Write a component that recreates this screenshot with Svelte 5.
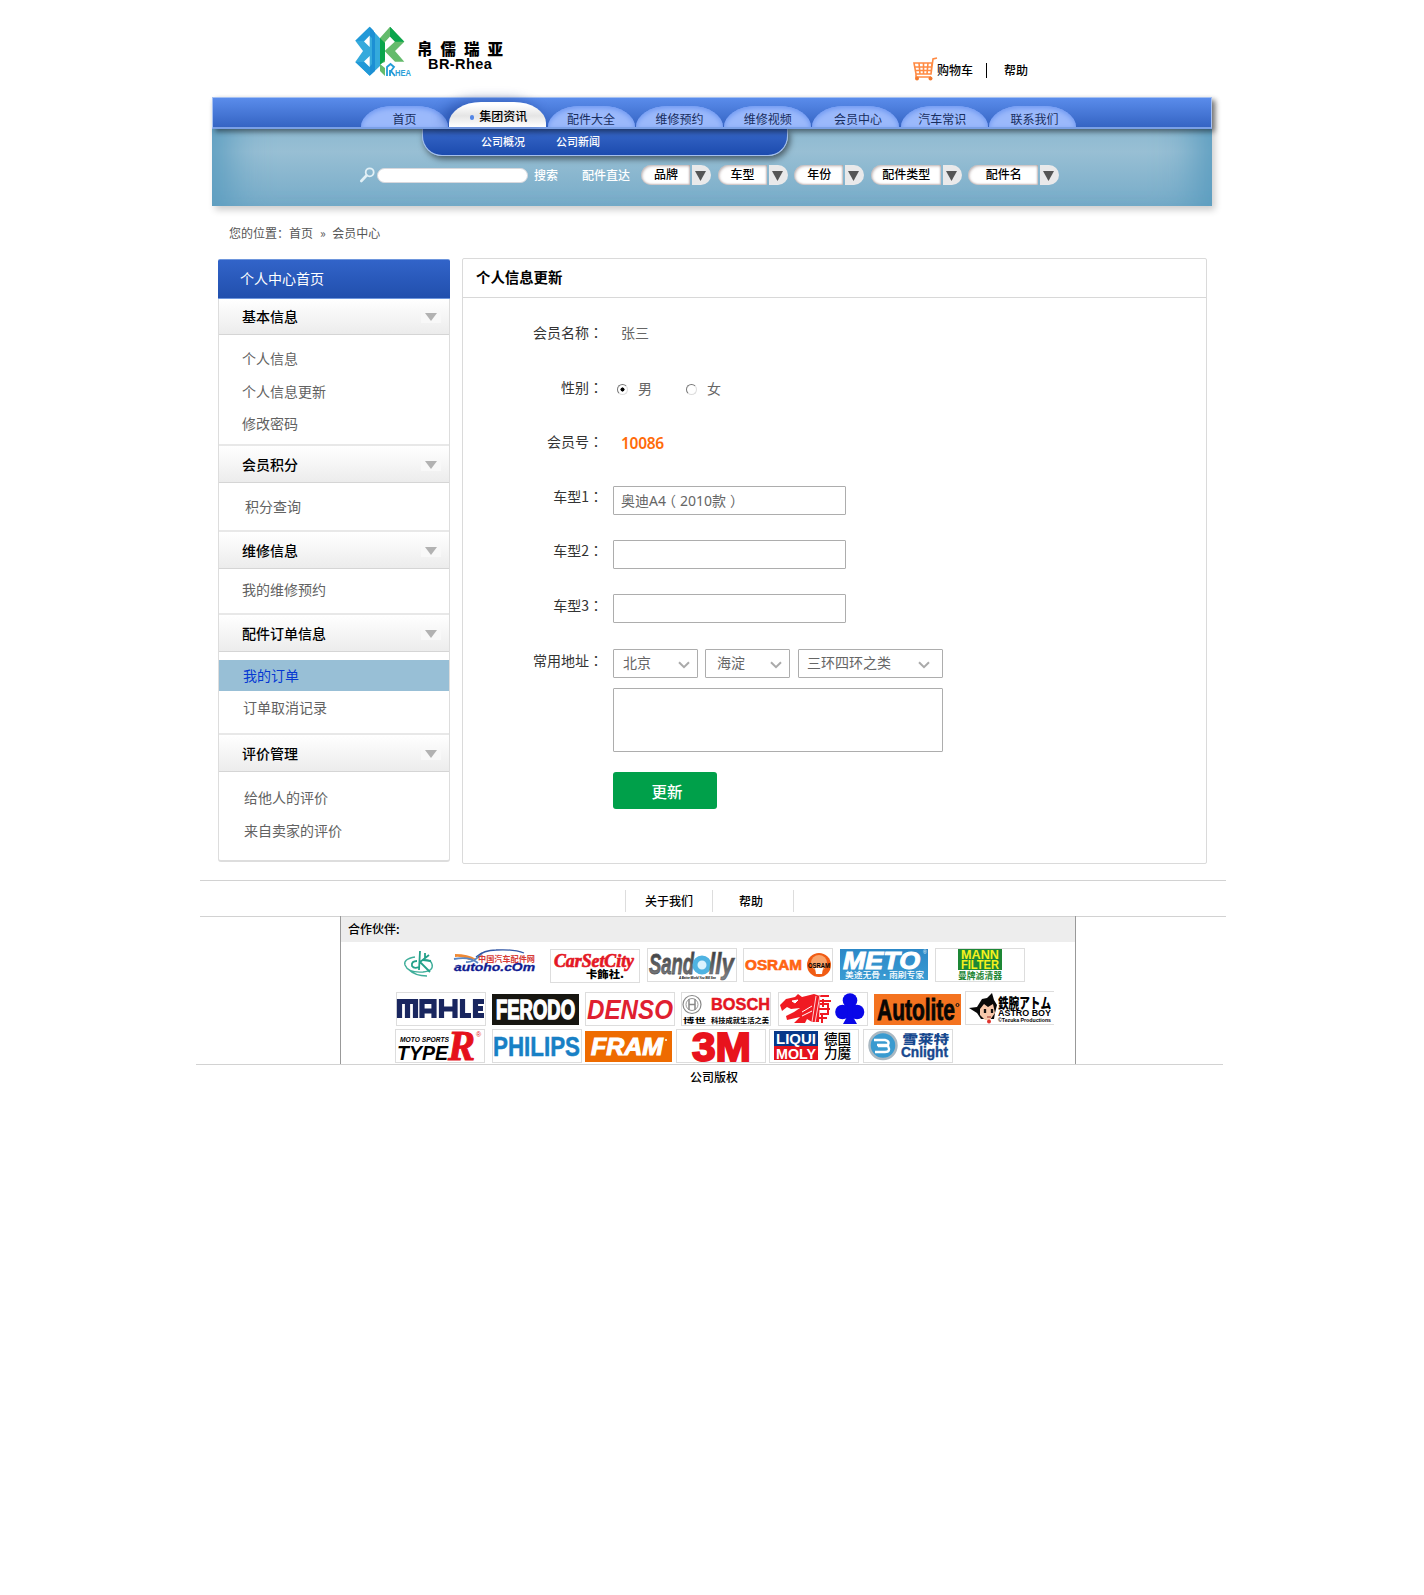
<script>
  const tabs = ['首页', '集团资讯', '配件大全', '维修预约', '维修视频', '会员中心', '汽车常识', '联系我们'];
  const filters = [
    { label: '品牌', size: 'small' },
    { label: '车型', size: 'small' },
    { label: '年份', size: 'small' },
    { label: '配件类型', size: 'large' },
    { label: '配件名', size: 'large' }
  ];
  const groups = [
    { key: 'basic', title: '基本信息', items: ['个人信息', '个人信息更新', '修改密码'] },
    { key: 'points', title: '会员积分', items: ['积分查询'] },
    { key: 'repair', title: '维修信息', items: ['我的维修预约'] },
    { key: 'orders', title: '配件订单信息', items: ['我的订单', '订单取消记录'] },
    { key: 'reviews', title: '评价管理', items: ['给他人的评价', '来自卖家的评价'] }
  ];
  const active = '我的订单';
</script>

{#snippet chevron()}
  <svg class="chevron" width="12" height="8" viewBox="0 0 12 8"><path d="M1 1.2 6 6.2 11 1.2" fill="none" stroke="#aaa" stroke-width="2" /></svg>
{/snippet}

<div class="page">
  <header>
    <svg class="emblem" width="58" height="52" viewBox="0 0 58 52">
      <path d="M14.700 .7 .3 14.700 8 25 .3 36 14.700 49.700 25 40V12Z" fill="#35aadc" />
      <path d="M14.700 .7 .3 14.700H9L14.700 9.500ZM.3 36H9L14.700 41V49.700Z" fill="#2199d8" />
      <path d="M14.700 .7 20 6V45L14.700 49.700V41L17 38V12L14.700 10Z" fill="#1c8fd4" />
      <path d="M14.700 9.500 9 15.500 14.700 21ZM14.700 30 9 35.500 14.700 41Z" fill="#fff" />
      <path d="M18 0 25 8V12L19 5.500Z" fill="#fff" />
      <path d="M25 12 35 .7 49.300 15.700 40 25 49.300 35.700H40L29.600 25 40 15.500 35 10.500 30 16V36L25 38Z" fill="#64bb6c" />
      <path d="M35 .7 49.300 15.700H40L35 10.500ZM25 12 30 17V34L25 39Z" fill="#0aa54c" />
      <path d="M25 38 30 42V50L25 45Z" fill="#64bb6c" />
      <path d="M32 50V41L35.500 38 39 41 36 45 40 50M35 50V44" fill="none" stroke="#219bd8" stroke-width="1.800" />
      <text x="40" y="49.5" font-size="9" font-weight="bold" fill="#2ba0d9" textLength="16" lengthAdjust="spacingAndGlyphs">HEA</text>
    </svg>
    <div class="brand"><b>帛儒瑞亚</b><span>BR-Rhea</span></div>
    <div class="tools">
      <svg width="26" height="24" viewBox="0 0 26 24">
        <path d="M2 6H20L19 17H4ZM2.500 10H19.500M3.500 13.500H19M7 6 8 17M11.500 6V17M16 6 15 17M19 17 21 2 25 1M4 17 4 20H19" fill="none" stroke="#ff8a43" stroke-width="1.6" />
        <circle cx="5" cy="21.5" r="2" fill="#f47a30" /><circle cx="18.500" cy="21.5" r="2" fill="#f47a30" />
      </svg>
      <span class="cart">购物车</span><i></i><span>帮助</span>
    </div>
  </header>

  <div class="banner">
    <nav>
      {#each tabs as tab, i}
        <a class="tab" class:current={i === 1}>{#if i === 1}<i class="dot"></i>{/if}{tab}</a>
      {/each}
    </nav>
    <div class="submenu"><span>公司概况</span><span>公司新闻</span></div>
    <div class="search">
      <svg width="15" height="16" viewBox="0 0 15 16"><circle cx="9.700" cy="5.300" r="4" fill="none" stroke="#e2f0f6" stroke-width="1.8" /><path d="M6.500 8.500 1.300 14" stroke="#e2f0f6" stroke-width="2.600" stroke-linecap="round" /></svg>
      <div class="query"></div>
      <span class="go">搜索</span>
      <span class="direct">配件直达</span>
      <div class="filters">
        {#each filters as f}
          <div class="filter {f.size}"><span>{f.label}</span><b><svg width="11" height="10" viewBox="0 0 11 10"><path d="M0 0H11L5.500 10Z" fill="#555" /></svg></b></div>
        {/each}
      </div>
    </div>
  </div>

  <div class="crumbs">您的位置：<span>首页</span><em>»</em><span>会员中心</span></div>

  <div class="columns">
    <aside>
      <h2>个人中心首页</h2>
      {#each groups as g}
        <section class={g.key}>
          <h3>{g.title}<i><svg width="12" height="8" viewBox="0 0 12 8"><path d="M0 0H12L6 8Z" fill="#b2b2b2" /></svg></i></h3>
          <ul>
            {#each g.items as item}<li class:on={item === active}>{item}</li>{/each}
          </ul>
        </section>
      {/each}
    </aside>

    <main>
      <h1>个人信息更新</h1>
      <form>
        <div class="row"><label>会员名称<u>：</u></label><span class="value">张三</span></div>
        <div class="row"><label>性别<u>：</u></label>
          <div class="radios"><i class="radio checked"></i><span>男</span><i class="radio"></i><span>女</span></div>
        </div>
        <div class="row"><label>会员号<u>：</u></label><span class="value number">10086</span></div>
        <div class="row"><label>车型1<u>：</u></label><div class="input">奥迪A4<s class="open">（</s>2010款<s class="close">）</s></div></div>
        <div class="row"><label>车型2<u>：</u></label><div class="input"></div></div>
        <div class="row third"><label>车型3<u>：</u></label><div class="input"></div></div>
        <div class="row"><label>常用地址<u>：</u></label>
          <div class="address">
            <div class="select">北京{@render chevron()}</div>
            <div class="select mid">海淀{@render chevron()}</div>
            <div class="select wide">三环四环之类{@render chevron()}</div>
          </div>
        </div>
        <div class="area"></div>
        <button type="button">更新</button>
      </form>
    </main>
  </div>

  <div class="links"><span>关于我们</span><span>帮助</span></div>

  <div class="partners">
    <h4>合作伙伴:</h4>
    <div class="logos first">
      <svg viewBox="0 0 34 34" width="34" height="34">
        <path d="M12 9Q0 11 2 17Q5 25 20 24Q31 23 29 16Q28 12 22 12M5 21Q12 28 24 28" fill="none" stroke="#3fae9a" stroke-width="1.400" />
        <path d="M17 3 16 22M26 7 17 14 27 24M20 12 28 13M22 5V10M14 13Q8 13 9 18Q11 21 16 19" fill="none" stroke="#23a18a" stroke-width="1.800" />
      </svg>
      <svg viewBox="0 0 82 34" width="82" height="34">
        <path d="M1 6Q14 6 22 11L15 12Q8 8 1 9Z" fill="#f08a35" /><path d="M0 11Q16 8 24 15M12 14Q20 15 28 5" fill="none" stroke="#5a87c4" stroke-width="1.800" />
        <path d="M22 9Q30 2 42 2Q60 1 70 5" fill="none" stroke="#3157a5" stroke-width="1.300" />
        <text class="cn" x="24" y="13.500" font-size="8" fill="#d63b35" font-weight="bold" textLength="57" lengthAdjust="spacingAndGlyphs">中国汽车配件网</text>
        <text x="0" y="23" font-size="11" font-weight="bold" font-style="italic" fill="#101b91" stroke="#101b91" stroke-width=".3" textLength="81" lengthAdjust="spacingAndGlyphs">autoho.cOm</text>
      </svg>
      <svg class="framed lowered" viewBox="0 0 90 34" width="90" height="34">
        <text class="serif" x="4" y="18" font-size="19" font-weight="bold" font-style="italic" fill="#e41724" stroke="#e41724" stroke-width=".7" textLength="80" lengthAdjust="spacingAndGlyphs">CarSetCity</text>
        <text class="cn" x="36" y="29" font-size="10" font-weight="900" textLength="38" lengthAdjust="spacingAndGlyphs">卡飾社.</text>
      </svg>
      <svg class="framed" viewBox="0 0 90 34" width="90" height="34">
        <defs><linearGradient id="steel" x2="0" y2="1"><stop stop-color="#333" /><stop offset="1" stop-color="#85878b" /></linearGradient></defs>
        <text x="2" y="26" font-size="29" font-weight="bold" font-style="italic" fill="url(#steel)" stroke="#55565a" stroke-width=".8" textLength="45" lengthAdjust="spacingAndGlyphs">Sand</text>
        <circle cx="55" cy="17" r="7" fill="#d9f3fe" stroke="#4fb3e2" stroke-width="5" />
        <text x="62" y="26" font-size="29" font-weight="bold" font-style="italic" fill="url(#steel)" stroke="#55565a" stroke-width=".6" textLength="25" lengthAdjust="spacingAndGlyphs">lly</text>
        <text x="32" y="31" font-size="3" font-weight="bold" font-style="italic" textLength="37">A Better World You Will See</text>
      </svg>
      <svg class="framed" viewBox="0 0 90 34" width="90" height="34">
        <text x="2" y="22" font-size="14" font-weight="bold" fill="#ff6412" stroke="#ff6412" stroke-width=".6" textLength="57" lengthAdjust="spacingAndGlyphs">OSRAM</text>
        <circle cx="76" cy="17" r="12" fill="#f15c14" /><circle cx="76" cy="15" r="8" fill="#f9a56c" /><path d="M72 20H80L79 26H73Z" fill="#fff" />
        <text x="65" y="19.500" font-size="6.500" font-weight="bold" textLength="22" lengthAdjust="spacingAndGlyphs">OSRAM</text>
      </svg>
      <svg viewBox="0 0 88 34" width="88" height="34">
        <defs><linearGradient id="meto" x2="0" y2="1"><stop stop-color="#2c88c7" /><stop offset="1" stop-color="#3a9bd2" /></linearGradient></defs>
        <path d="M0 1H88V32H0Z" fill="url(#meto)" />
        <text x="3" y="21" font-size="24" font-weight="bold" font-style="italic" fill="#fff" stroke="#fff" textLength="77" lengthAdjust="spacingAndGlyphs">METO</text><text x="83" y="6" font-size="5" fill="#fff">®</text>
        <text class="cn" x="5" y="30" font-size="8.500" fill="#fff" font-weight="500" textLength="79" lengthAdjust="spacingAndGlyphs">美途无骨•雨刷专家</text>
      </svg>
      <svg class="framed" viewBox="0 0 90 34" width="90" height="34">
        <path d="M23 1H67V22H23Z" fill="#1d8735" />
        <g fill="#f6f11e" font-weight="bold" font-size="12"><text x="26" y="11" textLength="38" lengthAdjust="spacingAndGlyphs">MANN</text><text x="26" y="20.500" textLength="38" lengthAdjust="spacingAndGlyphs">FILTER</text></g>
        <text class="cn" x="23" y="31" font-size="9" font-weight="bold" fill="#1d8735" textLength="44" lengthAdjust="spacingAndGlyphs">曼牌滤清器</text>
      </svg>
    </div>
    <div class="logos second">
      <svg class="framed" viewBox="0 0 90 34" width="90" height="34"><g fill="none" stroke="#19265f" stroke-width="5.200"><path d="M3.500 26V9.500H19.500V26M11.500 9.500V26M26 26V9.500H38V26M26 19H38M45.500 7V26M59 7V26M45.500 17H59M66.500 7V23.500H75M88 9.500H79.500V23.500H88M79 16.500H87" /></g></svg>
      <svg viewBox="0 0 87 34" width="87" height="34"><path d="M0 2H87V33H0Z" fill="#171611" /><text x="4" y="27" font-size="27" font-weight="bold" fill="#fff" stroke="#fff" stroke-width="1.500" textLength="79" lengthAdjust="spacingAndGlyphs">FERODO</text></svg>
      <svg class="framed" viewBox="0 0 90 34" width="90" height="34"><text x="2" y="27" font-size="28" font-weight="bold" font-style="italic" fill="#df2030" textLength="86" lengthAdjust="spacingAndGlyphs">DENSO</text></svg>
      <svg class="framed" viewBox="0 0 90 34" width="90" height="34">
        <circle cx="11" cy="12.500" r="9" fill="none" stroke="#888" stroke-width="1.200" /><circle cx="11" cy="12.500" r="6" fill="none" stroke="#999" /><path d="M8 7V18M14 7V18M8 12.500H14" stroke="#888" stroke-width="1.500" />
        <text x="30" y="18" font-size="17" font-weight="bold" fill="#e41522" stroke="#e41522" stroke-width=".5" textLength="59" lengthAdjust="spacingAndGlyphs">BOSCH</text>
        <g font-size="6.500" font-weight="bold"><text class="cn" x="2" y="31" textLength="23" lengthAdjust="spacingAndGlyphs">博世</text><text class="cn" x="30" y="31" textLength="58" lengthAdjust="spacingAndGlyphs">科技成就生活之美</text></g>
      </svg>
      <svg class="framed" viewBox="0 0 90 34" width="90" height="34">
        <path d="M2 13 8 7 17 5 20 2 24 5 36 2 42 4 41 30H34L29 27 27 31H16L22 25 9 28 8 24 16 20 22 16 13 17 9 15 4 19Z" fill="#f01a22" />
        <path d="M14 9 20 8 17 11ZM24 20 34 14M24 24 34 19" fill="#fff" stroke="#fff" />
        <path d="M41 4H51M40 9H53M45 7V15M39 17H52M42 12H50V22H42M40 26H49M44 21V31" fill="none" stroke="#f01a22" stroke-width="2" />
        <path d="M38 4 34 30M42 3 37 31" stroke="#fff" stroke-width=".8" />
        <g fill="#0907e8"><circle cx="72" cy="8.500" r="7.300" /><circle cx="64.500" cy="20" r="7.300" /><circle cx="79" cy="20" r="7.300" /><path d="M69 12H75L74 23 79 32H65L70 23Z" /></g>
      </svg>
      <svg viewBox="0 0 87 34" width="87" height="34"><path d="M0 2H87V33H0Z" fill="#f47320" /><text x="3" y="28" font-size="29" font-weight="bold" fill="#080604" stroke="#080604" stroke-width=".8" textLength="78" lengthAdjust="spacingAndGlyphs">Autolite</text><circle cx="83.500" cy="13" r="1.500" fill="none" stroke="#111" /></svg>
      <svg class="framed open-right raised" viewBox="0 0 90 34" width="90" height="34">
        <path d="M4 17 12 16 17 8 22 7 27 2 29 9 32 14 30 22 29 28H16L12 22Z" fill="#090909" /><path d="M15 18 19 13 23 16 28 13 30 22 25 29H20L15 24Z" fill="#f8c8aa" />
        <path d="M20 18V22M27 18V22" stroke="#111" stroke-width="2.300" /><path d="M22 26H26" stroke="#9b2922" /><circle cx="24" cy="30.500" r="2" fill="#e0342e" />
        <text class="cn" x="33" y="17" font-size="14" font-weight="900" textLength="53" lengthAdjust="spacingAndGlyphs">鉄腕アトム</text>
        <text x="33" y="25" font-size="9" font-weight="bold" textLength="53" lengthAdjust="spacingAndGlyphs">ASTRO BOY</text><text x="33" y="31" font-size="5" font-weight="bold" textLength="53" lengthAdjust="spacingAndGlyphs">©Tezuka Productions</text>
      </svg>
    </div>
    <div class="logos last">
      <svg class="framed" viewBox="0 0 90 34" width="90" height="34">
        <text x="5" y="13" font-size="7" font-weight="bold" font-style="italic" textLength="49" lengthAdjust="spacingAndGlyphs">MOTO SPORTS</text>
        <text x="2" y="30.500" font-size="21" font-weight="bold" font-style="italic" textLength="51" lengthAdjust="spacingAndGlyphs">TYPE</text>
        <text class="serif" x="53" y="30.500" font-size="42" font-weight="bold" font-style="italic" fill="#e5111b" stroke="#e5111b" textLength="27" lengthAdjust="spacingAndGlyphs">R</text><text x="81" y="8" font-size="7" fill="#e5111b">®</text>
      </svg>
      <svg class="framed" viewBox="0 0 90 34" width="90" height="34"><text x="1" y="27" font-size="27" font-weight="bold" fill="#1880c5" stroke="#1880c5" stroke-width=".5" textLength="87" lengthAdjust="spacingAndGlyphs">PHILIPS</text></svg>
      <svg viewBox="0 0 87 34" width="87" height="34"><path d="M0 2H87V33H0Z" fill="#ee6b00" /><text x="6" y="26" font-size="23" font-weight="bold" font-style="italic" fill="#fff" stroke="#fff" textLength="72" lengthAdjust="spacingAndGlyphs">FRAM</text><circle cx="81" cy="11" r="1" fill="#fff" /></svg>
      <svg class="framed" viewBox="0 0 90 34" width="90" height="34"><text x="16" y="31.500" font-size="41" font-weight="bold" fill="#e8131d" stroke="#e8131d" stroke-width="2" textLength="59" lengthAdjust="spacingAndGlyphs">3M</text></svg>
      <svg class="framed" viewBox="0 0 90 34" width="90" height="34">
        <path d="M5 2H49V17H5Z" fill="#063889" /><path d="M5 17H49V31H5Z" fill="#e5131c" />
        <g fill="#fff" font-size="15" font-weight="bold"><text x="7" y="15" textLength="40" lengthAdjust="spacingAndGlyphs">LIQUI</text><text x="7" y="29.500" textLength="40" lengthAdjust="spacingAndGlyphs">MOLY</text></g>
        <g font-size="13.500" font-weight="500"><text class="cn" x="55" y="15">德国</text><text class="cn" x="55" y="29">力魔</text></g>
      </svg>
      <svg class="framed" viewBox="0 0 90 34" width="90" height="34">
        <circle cx="20" cy="16.500" r="13.500" fill="#3a9bd0" stroke="#a9b8c2" stroke-width="2.500" /><path d="M11 11H22Q27 12 25 16H14M15 17H25Q28 23 22 23H12" fill="none" stroke="#fff" stroke-width="2.500" />
        <text class="cn" x="40" y="14.500" font-size="13" font-weight="900" fill="#17488e" textLength="47" lengthAdjust="spacingAndGlyphs" transform="skewX(-5)">雪莱特</text>
        <text x="38" y="28" font-size="14" font-weight="bold" fill="#17488e" stroke="#17488e" stroke-width=".4" textLength="47" lengthAdjust="spacingAndGlyphs">Cnlight</text>
      </svg>
    </div>
  </div>
  <footer>公司版权</footer>
</div>

<style>
  :global(body) { background: #fff; }
  .page { width: 1424px; min-height: 1595px; box-sizing: border-box; overflow: hidden; font: 12px/18px "Noto Sans CJK SC", sans-serif; color: #000; }
  .page * { box-sizing: border-box; }
  h1, h2, h3, h4, ul { margin: 0; padding: 0; font-weight: 400; list-style: none; }
  i, em { font-style: normal; }
  u { text-decoration: none; font-family: "Noto Sans CJK TC", sans-serif; }
  s { text-decoration: none; font-family: "Noto Sans CJK SC", sans-serif; }
  .open { margin: 0 4px 0 -4px; }
  .close { margin-left: 4px; }
  svg { display: block; flex: none; overflow: visible; }
  svg text { font-family: "Liberation Sans", sans-serif; }
  svg text.cn { font-family: "Noto Sans CJK SC", sans-serif; }
  svg text.serif { font-family: "Liberation Serif", serif; }

  header { height: 97px; padding: 26px 0 0 355px; display: flex; align-items: flex-start; }
  .brand { width: 92px; margin: 12px 0 0 4px; display: flex; flex-direction: column; }
  .brand b { font-weight: 900; font-size: 15.500px; line-height: 20px; letter-spacing: 8px; white-space: nowrap; }
  .brand span { font: bold 14.500px/14px "Liberation Sans", sans-serif; padding-left: 11px; margin-top: -1px; letter-spacing: .45px; }
  .tools { display: flex; align-items: center; margin: 31px 0 0 403px; font-weight: 500; white-space: nowrap; height: 24px; }
  .tools span { position: relative; top: 1px; left: -1px; }
  .tools i { width: 1px; height: 15px; background: #000; margin: 3px 18px 0 12px; }

  .banner { width: 1000px; height: 109px; margin-left: 212px; background: linear-gradient(#7eb0cb, #98bfd4 50%, #76abc8); box-shadow: 3px 4px 7px #0003, inset 50px 0 40px -34px #5a9cbf, inset -50px 0 40px -34px #5a9cbf; display: flex; flex-direction: column; }
  nav { position: relative; z-index: 1; height: 32px; padding-left: 148px; display: flex; align-items: flex-end; gap: 1.300px; background: linear-gradient(#5a8ceb, #3564c3); border: 1px solid #a4c0f3; border-bottom: 2px solid #7aa0e6; box-shadow: 3px 3px 5px #0007; flex: none; }
  .tab { width: 87px; height: 21px; border-radius: 32px 32px 0 0 / 21px 21px 0 0; padding-top: 4px; text-align: center; color: #172d5e; background: #9bb9fb; box-shadow: inset 0 2px 5px #6f98f2; line-height: 17px; }
  .tab:nth-child(6) { padding-left: 4px; }
  .tab:nth-child(7) { padding-right: 4px; }
  .tab:nth-child(8) { padding-left: 4px; }
  .tab.current { width: 97px; height: 25px; color: #000; font-weight: 500; background: linear-gradient(#fff 10%, #e5e5e5 55%, #fff); box-shadow: -6px -3px 12px #0b2c8566; padding: 5px 0 0 2px; display: flex; justify-content: center; gap: 5px; }
  .dot { width: 4px; height: 5px; border-radius: 2px; background: #5386e6; margin-top: 8px; }
  .submenu { flex: none; width: 366px; height: 27px; margin-left: 210px; padding: 3px 0 0 58px; display: flex; gap: 31px; font-size: 11px; font-weight: 500; color: #fff; border: solid #a4bfed; border-width: 0 1px 1px; border-radius: 0 0 20px 20px; background: linear-gradient(#3868c9, #1c4bae); box-shadow: 2px 3px 6px #0008; }
  .search { height: 20px; margin: 9px 0 0 148px; display: flex; align-items: center; color: #fff; font-weight: 500; white-space: nowrap; flex: none; }
  .query { width: 151px; height: 15px; margin-left: 2px; border-radius: 8px; background: #fff; border: 1px solid #d8d8dd; }
  .go { width: 48px; margin-left: 6px; }
  .direct { width: 59px; }
  .filters { display: flex; gap: 6.600px; }
  .filter { display: flex; gap: 2px; width: 70px; height: 20px; color: #000; }
  .filter.large { width: 91px; }
  .filter span { flex: 1; line-height: 18px; text-align: center; background: #fff; border-radius: 10px 0 0 10px; box-shadow: inset 1px 1px 3px #8779, inset -1px -1px 2px #a999; padding-left: 1px; }
  .filter b { width: 19px; border-radius: 0 10px 10px 0; background: #e9e9ea; padding: 6px 0 0 3px; }

  .crumbs { height: 52px; padding: 18px 0 0 229px; color: #555; white-space: nowrap; }
  .crumbs em { margin: 0 6.500px 0 7px; }

  .columns { display: flex; align-items: flex-start; gap: 12px; margin-left: 218px; }
  aside { width: 232px; height: 603px; margin-top: 1px; border: solid #ddd; border-width: 0 1px 2px; border-radius: 3px; }
  aside h2 { height: 40px; margin: 0 -1px; padding-left: 22px; color: #fff; font-size: 14px; line-height: 36px; background: linear-gradient(#3264c9, #214fad); border: 1px solid #6e96dd; border-left: 0; border-right: 0; border-radius: 2px 2px 0 0; }
  aside h3 { height: 39px; display: flex; align-items: center; justify-content: space-between; padding: 0 8px 0 23px; font-size: 14px; font-weight: 500; border-top: 2px solid #e8e8e8; border-bottom: 1px solid #d5d5d5; background: linear-gradient(#fff, #ececec); }
  .basic h3 { height: 36px; border-top: 0; padding-bottom: 1px; }
  h3 i { width: 20px; height: 12px; padding: 2px 4px; background: #f8f8f8; position: relative; top: 1px; }
  aside ul { color: #626262; font-size: 14px; }
  aside li { padding-left: 23px; height: 32.500px; line-height: 32px; }
  .basic { height: 145px; } .basic ul { padding-top: 7px; }
  .points { height: 86px; } .points ul { padding-top: 7px; } .points li { padding-left: 26px; }
  .repair { height: 83px; } .repair ul { padding-top: 4px; }
  .orders { height: 120px; } .orders ul { padding-top: 8px; } .orders li { padding-left: 24px; }
  .orders li + li { line-height: 31px; }
  .reviews ul { padding-top: 9px; } .reviews li { padding-left: 25px; height: 33px; }
  li.on { height: 31px; line-height: 30px; background: #98bfd6; color: #0638d2; margin-bottom: 1px; }

  main { width: 745px; height: 606px; border: 1px solid #dadada; border-radius: 2px; }
  h1 { height: 39px; line-height: 36px; padding-left: 13px; font-size: 14.400px; font-weight: 700; border-bottom: 1px solid #d8d8d8; }
  main { margin-bottom: 0; }
  form { padding-top: 24px; font-size: 14px; line-height: 20px; color: #666; }
  .row { height: 54.500px; display: flex; align-items: flex-start; }
  label { width: 140px; text-align: right; color: #333; margin-right: 10px; }
  .value { padding: 0 0 0 8px; }
  .number { font: 600 15.500px/25px "Noto Sans", sans-serif; color: #ff6b0a; letter-spacing: -.3px; }
  .radios { display: flex; padding: 1px 0 0 4px; }
  .radios span { margin: 0 34px 0 10px; }
  .radio { width: 11px; height: 11px; margin-top: 6px; border-radius: 50%; border: 1px solid; border-color: #777 #ddd #ddd #777; }
  .checked { background: radial-gradient(circle, #000 1.800px, #fff 2.300px); }
  .input, .select, .area { border: 1px solid #adadad; border-radius: 1px; background: #fff; }
  .input { width: 233px; height: 29px; padding-left: 7px; line-height: 26px; font-family: "Noto Sans", "Noto Sans CJK SC", sans-serif; }
  .third { height: 55px; } .third .input { margin-top: -1px; }
  .address { display: flex; gap: 7px; margin-top: -1px; }
  .select { width: 85px; height: 29px; padding: 0 7px 0 9px; display: flex; align-items: center; justify-content: space-between; line-height: 24px; padding-bottom: 3px; }
  .select.mid { padding-left: 11px; }
  .select.wide { width: 145px; padding: 0 12px 3px 8px; margin-left: 1px; }
  .chevron { margin-top: 7px; }
  .area { width: 330px; height: 64px; margin: -16px 0 20px 150px; }
  button { display: block; width: 104px; height: 37px; margin-left: 150px; padding: 0 0 0 4px; border: 0; border-radius: 3px; background: #00a04a; color: #fff; font: 500 15.500px/36px "Noto Sans CJK SC", sans-serif; }

  .links { width: 1026px; height: 37px; margin: 16px 0 0 200px; border: solid #d2d2d2; border-width: 1px 0; padding: 9px 0 0 425px; display: flex; font-weight: 500; }
  .links span { height: 22px; width: 87px; padding-left: 19px; line-height: 21px; border-left: 1px solid #ddd; }
  .links span + span { width: 82px; padding-left: 26px; border-right: 1px solid #ddd; }
  .partners { width: 736px; height: 148px; margin: -1px 0 0 340px; border: solid #999; border-width: 0 1px; }
  h4 { height: 26px; padding-left: 7px; background: #ededed; font-weight: 500; line-height: 23px; border-top: 1px solid #d2d2d2; }
  .logos { display: grid; justify-content: start; align-items: start; height: 34px; }
  .framed { box-shadow: inset 0 0 0 1px #ddd; }
  .open-right { clip-path: inset(0 1px 0 0); }
  .first { grid-template-columns: 51px 96px 97px 96px 97px 95px 90px; margin: 6px 0 0 62px; }
  .second { grid-template-columns: 96px 93px 96px 97px 96px 91px 90px; margin: 10px 0 0 55px; }
  .last { grid-template-columns: 97px 93px 91px 93px 94px 90px; margin: 3px 0 0 54px; }
  .raised { margin-top: -1px; }
  .lowered { margin-top: 1px; }
  footer { width: 1027px; margin-left: 196px; border-top: 1px solid #d2d2d2; padding: 3px 0 0 494px; font-weight: 500; }
</style>
